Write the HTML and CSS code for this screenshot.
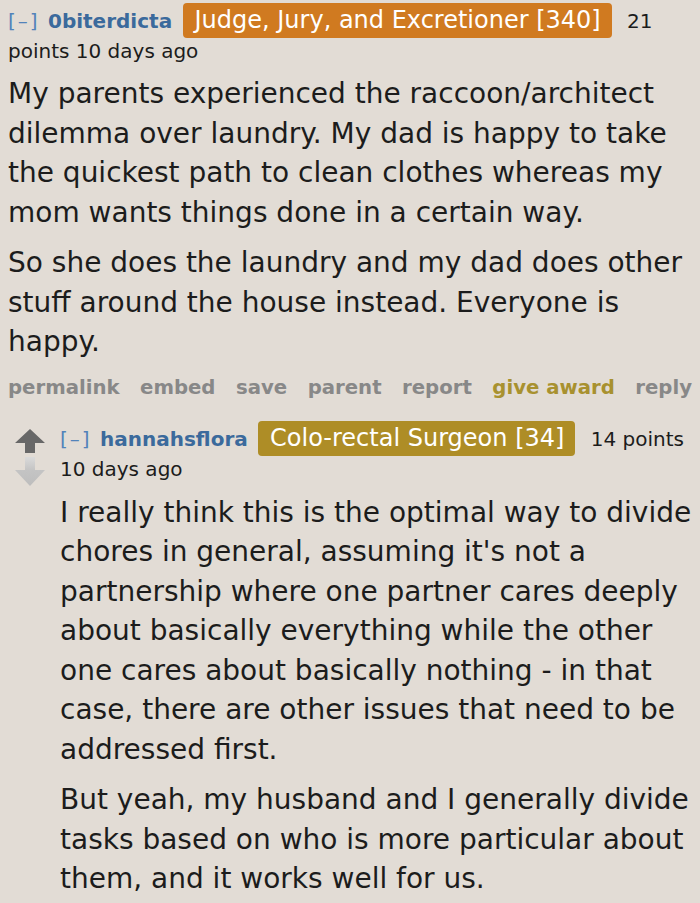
FILE: index.html
```html
<!DOCTYPE html>
<html>
<head>
<meta charset="utf-8">
<link rel="stylesheet" href="styles.css">
</head>
<body>
<div class="comment">
  <div class="entry">
    <p class="tagline"><span class="expand">[–]</span> <span class="author">0biterdicta</span> <span class="flair flair-orange">Judge, Jury, and Excretioner [340]</span> <span class="score">21</span> <span class="unit">points</span> <span class="time">10 days ago</span></p>
    <div class="md">
      <p>My parents experienced the raccoon/architect dilemma over laundry. My dad is happy to take the quickest path to clean clothes whereas my mom wants things done in a certain way.</p>
      <p>So she does the laundry and my dad does other stuff around the house instead. Everyone is happy.</p>
    </div>
    <ul class="buttons">
      <li>permalink</li>
      <li>embed</li>
      <li>save</li>
      <li>parent</li>
      <li>report</li>
      <li class="award">give award</li>
      <li>reply</li>
    </ul>
  </div>
</div>
<div class="comment child">
  <div class="midcol">
    <svg class="arrow" width="30" height="24" viewBox="0 0 30 24"><polygon points="15,0 30,14 20,14 20,24 10,24 10,14 0,14" fill="#686868"/></svg>
    <svg class="arrow" width="30" height="29" viewBox="0 0 30 29"><defs><linearGradient id="dg" x1="0" y1="0" x2="0" y2="1"><stop offset="0" stop-color="#dadada"/><stop offset="0.45" stop-color="#c4c4c4"/><stop offset="1" stop-color="#bdbdbd"/></linearGradient></defs><polygon points="10,0 20,0 20,13 30,13 15,29 0,13 10,13" fill="url(#dg)"/></svg>
  </div>
  <div class="entry">
    <p class="tagline"><span class="expand">[–]</span> <span class="author">hannahsflora</span> <span class="flair flair-gold">Colo-rectal Surgeon [34]</span> <span class="score">14</span> <span class="unit">points</span> <span class="time">10 days ago</span></p>
    <div class="md md-child">
      <p>I really think this is the optimal way to divide chores in general, assuming it's not a partnership where one partner cares deeply about basically everything while the other one cares about basically nothing - in that case, there are other issues that need to be addressed first.</p>
      <p>But yeah, my husband and I generally divide tasks based on who is more particular about them, and it works well for us.</p>
    </div>
  </div>
</div>
</body>
</html>
```

FILE: styles.css
```css
html, body {
  background: #e2dcd5;
}
body {
  margin: 0;
  padding: 0 0 0 8px;
  font-family: "DejaVu Sans", Verdana, sans-serif;
  color: #1c1c1c;
  width: 698px;
  height: 903px;
  overflow: hidden;
  box-sizing: border-box;
}
.comment {
  display: flex;
}
.entry {
  flex: 1;
  min-width: 0;
}
.tagline {
  margin: 0;
  font-size: 20px;
  line-height: 30px;
  padding-top: 5px;
  color: #1c1c1c;
}
.expand {
  color: #5283ba;
  letter-spacing: 2px;
  margin-right: 2px;
}
.author {
  color: #3b6a9c;
  font-weight: bold;
}
.flair {
  color: #fff;
  font-size: 24px;
  padding: 3px 11px 4px 12px;
  border-radius: 4px;
  margin: 0 9px 0 4px;
}
.flair-orange {
  background: #d07a20;
}
.flair-gold {
  background: #ae8d26;
}
.md {
  font-size: 28px;
  line-height: 39.5px;
  margin-top: 8px;
}
.md-child {
  margin-top: 9px;
}
.md p {
  margin: 0 0 11px 0;
}
.md p:last-child {
  margin-bottom: 0;
}
.buttons {
  list-style: none;
  margin: 11px 0 0 0;
  padding: 0;
  display: flex;
  gap: 20.5px;
  font-size: 19.7px;
  line-height: 30px;
  font-weight: bold;
  color: #888888;
  white-space: nowrap;
}
.buttons .award {
  color: #a8912f;
}
.child {
  margin-top: 15px;
}
.midcol {
  width: 30px;
  margin-left: 7px;
  margin-right: 15px;
  padding-top: 11px;
  display: flex;
  flex-direction: column;
  align-items: center;
  gap: 4px;
}
.arrow {
  display: block;
}
```
